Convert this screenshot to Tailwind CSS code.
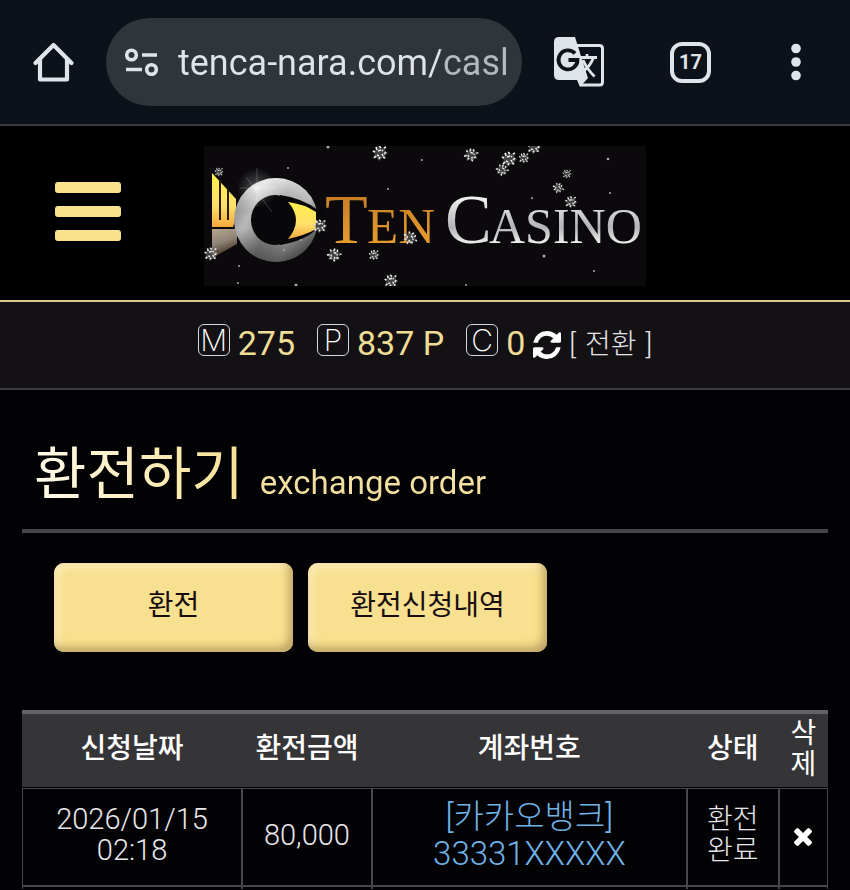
<!DOCTYPE html>
<html lang="ko">

<head>
    <meta charset="UTF-8">
    <meta name="viewport" content="width=device-width, initial-scale=1.0">
    <title>Ten Casino - 환전하기</title>
    <script src="https://cdn.jsdelivr.net/npm/@tailwindcss/browser@4"></script>
</head>

<body class="min-h-screen overflow-x-hidden bg-[#020104] text-white font-['Roboto','Noto_Sans_CJK_KR',sans-serif]">

    <!-- browser bar -->
    <div class="flex items-center border-b-2 border-[#3b3c40] bg-[#0d1119] pt-[18px] pb-[18px] pl-8 pr-11 text-[#dfe3ea]">
        <button class="shrink-0" aria-label="Home">
            <svg class="h-11 w-11" viewBox="0 0 44 44" fill="none" stroke="currentColor" stroke-width="4.200" stroke-linejoin="round">
                <path d="M3.500 22L21.500 4L39.500 22M8 18V38.500H35V18" stroke-linecap="round" transform="translate(0 1)" />
            </svg>
        </button>
        <div class="ml-[30px] flex h-[88px] min-w-0 flex-1 items-center rounded-full bg-[#2f3539] pl-[18px] pr-3">
            <svg class="h-9 w-9 shrink-0" viewBox="0 0 36 36" fill="none" stroke="currentColor" stroke-width="3.600">
                <circle cx="7.500" cy="11" r="4.800" />
                <path d="M18 11H33M2 25.500H18" />
                <circle cx="27.500" cy="25.500" r="4.800" />
            </svg>
            <input type="text" value="tenca-nara.com/casl" aria-label="URL"
                class="ml-[18px] h-12 min-w-0 flex-1 bg-linear-to-r from-[#dfe3ea] from-79% to-[#b4b9be] to-79% bg-clip-text pt-[2px] text-[36px] text-transparent outline-none">
        </div>
        <button class="ml-8 shrink-0" aria-label="Translate">
            <svg class="h-[50px] w-[51px]" viewBox="0 0 51 50">
                <path d="M22 8.500H45.500Q48.500 8.500 48.500 11.500V45Q48.500 48 45.500 48H26" fill="none" stroke="#dfe3ea" stroke-width="3" />
                <path d="M5 0H21L34 41L26 50L23 43H5Q0 43 0 38V5Q0 0 5 0Z" fill="#dfe3ea" />
                <path d="M26 15.500L35 43L45 43V15Z" fill="#0d1119" />
                <path d="M27 20.500H43M33 17V20.500M39.500 20.500Q36 30 28 35M29 23Q33 32 40.500 39.500" fill="none" stroke="#dfe3ea" stroke-width="2.800" />
                <path d="M21 16.500A9.500 9.500 0 1 0 23.500 23H14.500" fill="none" stroke="#0d1119" stroke-width="3.800" />
            </svg>
        </button>
        <button class="ml-[65px] flex h-[41px] w-[41px] shrink-0 items-center justify-center rounded-xl border-4 border-[#dfe3ea] font-['Roboto',sans-serif] text-xl font-bold" aria-label="Tabs">17</button>
        <button class="ml-[75px] shrink-0" aria-label="Menu">
            <svg class="h-10 w-5" viewBox="0 0 20 40" fill="currentColor">
                <circle cx="10" cy="6.500" r="4.800" />
                <circle cx="10" cy="20" r="4.800" />
                <circle cx="10" cy="33.500" r="4.800" />
            </svg>
        </button>
    </div>

    <!-- site header -->
    <header class="relative flex justify-center border-b-2 border-[#d8c98c] bg-black pt-5 pb-[14px]">
        <button class="absolute top-14 left-[55px] flex w-[66px] flex-col gap-[13px]" aria-label="메뉴">
            <span class="block h-[11px] w-full rounded-[3px] bg-[#fae18d]"></span>
            <span class="block h-[11px] w-full rounded-[3px] bg-[#fae18d]"></span>
            <span class="block h-[11px] w-full rounded-[3px] bg-[#fae18d]"></span>
        </button>
        <a href="#" aria-label="Ten Casino">
            <svg class="h-[140px] w-[442px]" viewBox="0 0 442 140">
                <defs>
                    <linearGradient id="ring" x1="0" y1="0.300" x2="1" y2="0.800">
                        <stop offset="0" stop-color="#8b8b8b" />
                        <stop offset="0.200" stop-color="#b9b9b9" />
                        <stop offset="0.450" stop-color="#8a8a8a" />
                        <stop offset="0.700" stop-color="#a5a5a5" />
                        <stop offset="1" stop-color="#555" />
                    </linearGradient>
                    <linearGradient id="shade" x1="0" y1="0" x2="0" y2="1">
                        <stop offset="0" stop-color="#fff" stop-opacity="0.700" />
                        <stop offset="0.400" stop-color="#fff" stop-opacity="0" />
                        <stop offset="0.600" stop-color="#000" stop-opacity="0" />
                        <stop offset="1" stop-color="#000" stop-opacity="0.450" />
                    </linearGradient>
                    <linearGradient id="gold" x1="0" y1="0" x2="0" y2="1">
                        <stop offset="0" stop-color="#fff04a" />
                        <stop offset="0.600" stop-color="#ffdf6a" />
                        <stop offset="1" stop-color="#f2a93c" />
                    </linearGradient>
                    <linearGradient id="mirror" x1="0" y1="0" x2="0.300" y2="1">
                        <stop offset="0" stop-color="#b9a68c" />
                        <stop offset="0.500" stop-color="#8f8579" />
                        <stop offset="1" stop-color="#3a2c18" />
                    </linearGradient>
                    <linearGradient id="ten" x1="0" y1="0" x2="0" y2="1">
                        <stop offset="0" stop-color="#bd7424" />
                        <stop offset="0.600" stop-color="#dd932c" />
                        <stop offset="1" stop-color="#efa52c" />
                    </linearGradient>
                    <linearGradient id="silver" x1="0" y1="0" x2="0" y2="1">
                        <stop offset="0.200" stop-color="#f4f4f4" />
                        <stop offset="0.600" stop-color="#b4b4b8" />
                        <stop offset="0.800" stop-color="#ececec" />
                    </linearGradient>
                    <radialGradient id="glow">
                        <stop offset="0" stop-color="#fff" stop-opacity="0.900" />
                        <stop offset="0.300" stop-color="#fff" stop-opacity="0.300" />
                        <stop offset="1" stop-color="#fff" stop-opacity="0" />
                    </radialGradient>
                    <g id="flake" fill="none">
                        <path d="M0-7L2-5L6-6L5-2L8 0L5 3L6 6L2 5L-1 8L-3 5L-7 5L-5 1L-8-2L-4-3L-4-7L-1-5Z" fill="#777" fill-opacity="0.550" />
                        <path d="M-1-7l2 2M4-5l2-1M6-1l-2 2M5 5l-2-1M-1 6l1-2M-6 5l2-2M-7-2l2 1M-4-6l1 3M-2-2l3-1M2 1l1 2M-3 2l2 1M2-3l1 1" stroke="#eee" stroke-width="1.600" />
                    </g>
                </defs>
                <rect width="442" height="140" fill="#0b090c" />
                <!-- emblem -->
                <path d="M8 27L32 53V72L29 81H8Z" fill="url(#gold)" />
                <path d="M16 34V74M24 43V74" stroke="#2a1b06" stroke-width="2" />
                <path d="M8 83H33V98L8 112Z" fill="url(#mirror)" />
                <circle cx="72" cy="74" r="42" fill="url(#ring)" />
                <circle cx="72" cy="74" r="42" fill="url(#shade)" />
                <ellipse cx="71" cy="74" rx="24" ry="25" fill="#08070a" />
                <path d="M76 49Q98 52 114 64L118 62V90L112 83Q103 94 76 99Z" fill="#08070a" />
                <path d="M84 56Q100 58 112 66V83Q102 89 84 93Q100 74 84 56Z" fill="url(#gold)" />
                <circle cx="53" cy="42" r="20" fill="url(#glow)" opacity="0.700" />
                <path d="M53 22V60M36 42H72M42 31L68 66M66 32L40 54" stroke="#fff" stroke-opacity="0.300" stroke-width="0.700" />
                <!-- wordmark -->
                <g font-family="Liberation Serif, serif">
                    <text y="97" fill="url(#ten)"><tspan x="121" font-size="70">T</tspan><tspan x="163" font-size="51">EN</tspan></text>
                    <text y="97" fill="url(#silver)"><tspan x="241" font-size="70">C</tspan><tspan x="285" font-size="50">ASINO</tspan></text>
                </g>
                <!-- snow -->
                <use href="#flake" transform="translate(15 26) scale(0.600)" />
                <use href="#flake" x="176" y="7" />
                <use href="#flake" transform="translate(7 108) scale(0.900)" />
                <use href="#flake" transform="translate(116 80) scale(0.900)" />
                <use href="#flake" transform="translate(130 109) rotate(40) scale(0.900)" />
                <use href="#flake" transform="translate(170 109) scale(0.700)" />
                <use href="#flake" transform="translate(206 92) rotate(70) scale(0.900)" />
                <use href="#flake" transform="translate(187 135) scale(0.900)" />
                <use href="#flake" transform="translate(267 9) rotate(30) scale(0.900)" />
                <use href="#flake" x="305" y="13" />
                <use href="#flake" transform="translate(298 24) rotate(50) scale(0.800)" />
                <use href="#flake" transform="translate(320 12) scale(0.700)" />
                <use href="#flake" transform="translate(330 1) scale(0.900)" />
                <use href="#flake" transform="translate(363 28) scale(0.600)" />
                <use href="#flake" transform="translate(354 42) rotate(60) scale(0.700)" />
                <use href="#flake" transform="translate(367 56) scale(0.800)" />
                <g fill="#aaa">
                    <circle cx="84" cy="22" r="1" /><circle cx="184" cy="43" r="1" /><circle cx="124" cy="1" r="1.500" />
                    <circle cx="80" cy="104" r="1" /><circle cx="97" cy="94" r="1" /><circle cx="35" cy="120" r="1" />
                    <circle cx="34" cy="137" r="1" /><circle cx="92" cy="139" r="1.500" /><circle cx="218" cy="14" r="1" />
                    <circle cx="404" cy="13" r="1.300" /><circle cx="406" cy="47" r="1" /><circle cx="328" cy="52" r="1" />
                    <circle cx="340" cy="110" r="1.500" /><circle cx="390" cy="125" r="1" /><circle cx="262" cy="139" r="1" />
                </g>
            </svg>
        </a>
    </header>

    <!-- balance -->
    <div class="flex h-[88px] items-center justify-center border-b-2 border-[#3c3b3e] bg-[#131114] pb-1 text-[34px] text-[#f0dc94]">
        <span class="mr-2 mb-1.5 flex h-8 w-8 items-center justify-center rounded-md border border-[#d8d8dc] font-['Inter',sans-serif] text-[30px] font-extralight text-white">M</span>
        <span>275</span>
        <span class="ml-[22px] mr-2 mb-1.5 flex h-8 w-8 items-center justify-center rounded-md border border-[#d8d8dc] font-['Inter',sans-serif] text-[30px] font-extralight text-white">P</span>
        <span>837 P</span>
        <span class="ml-[22px] mr-2 mb-1.5 flex h-8 w-8 items-center justify-center rounded-md border border-[#d8d8dc] font-['Inter',sans-serif] text-[30px] font-extralight text-white">C</span>
        <span>0</span>
        <button class="ml-2 mt-1" aria-label="새로고침">
            <svg class="h-7 w-7" viewBox="0 0 1536 1536" fill="#fff">
                <path d="M1511 928q0 5-1 7-64 268-268 434.500t-478 166.500q-146 0-282.500-55t-243.500-157l-129 129q-19 19-45 19t-45-19-19-45v-448q0-26 19-45t45-19h448q26 0 45 19t19 45-19 45l-137 137q71 66 161 102t187 36q134 0 250-65t186-179q11-17 53-117 8-23 30-23h192q13 0 22.500 9.500t9.500 22.500zm25-800v448q0 26-19 45t-45 19h-448q-26 0-45-19t-19-45 19-45l138-138q-148-137-349-137-134 0-250 65t-186 179q-11 17-53 117-8 23-30 23h-199q-13 0-22.500-9.500t-9.500-22.500v-7q65-268 270-434.500t480-166.500q146 0 284 55.500t245 156.500l130-129q19-19 45-19t45 19 19 45z" />
            </svg>
        </button>
        <a href="#" class="ml-2 mt-1 flex gap-[9px] text-[28px] font-light text-[#e4e4e6]"><span>[</span><span>전환</span><span>]</span></a>
    </div>

    <main class="px-[22px]">
        <h1 class="flex items-baseline border-b-4 border-[#454448] pt-[41px] pb-0.5 pl-3 text-[57px] leading-[88px]">
            <span class="bg-linear-to-r from-[#fffbe9] to-[#f8e190] bg-clip-text text-transparent">환전하기</span>
            <span class="ml-4 bg-linear-to-b from-[#f8e7b0] to-[#f0d890] bg-clip-text text-[33px] text-transparent">exchange order</span>
        </h1>

        <div class="flex gap-[15px] pt-[30px] pl-8 text-[28px] text-[#170d10]">
            <button class="h-[89px] w-[239px] rounded-[10px] bg-[#f7e08f] pb-1 shadow-[inset_-4px_-5px_8px_#bfa564,inset_4px_4px_8px_#ffedbd]">환전</button>
            <button class="h-[89px] w-[239px] rounded-[10px] bg-[#f7e08f] pb-1 shadow-[inset_-4px_-5px_8px_#bfa564,inset_4px_4px_8px_#ffedbd]">환전신청내역</button>
        </div>

        <table class="mt-[58px] w-full table-fixed border-separate border-spacing-0 text-center text-[28px] leading-[31px]">
            <colgroup>
                <col class="w-[27.3%]">
                <col class="w-[16.1%]">
                <col class="w-[39.1%]">
                <col class="w-[11.4%]">
                <col class="w-[6.1%]">
            </colgroup>
            <thead>
                <tr class="h-[78px] bg-[#353437]">
                    <th class="border-t-4 border-b border-t-[#626164] border-b-black pb-1 font-medium">신청날짜</th>
                    <th class="border-t-4 border-b border-t-[#626164] border-b-black pb-1 font-medium">환전금액</th>
                    <th class="border-t-4 border-b border-t-[#626164] border-b-black pb-1 font-medium">계좌번호</th>
                    <th class="border-t-4 border-b border-t-[#626164] border-b-black pb-1 font-medium">상태</th>
                    <th class="border-t-4 border-b border-t-[#626164] border-b-black px-2 pb-1 font-normal">삭제</th>
                </tr>
            </thead>
            <tbody class="font-light text-[#e8e8ea]">
                <tr class="h-[98px]">
                    <td class="border border-[#49474b] pb-1 text-[29px] leading-[31px]">2026/01/15<br>02:18</td>
                    <td class="border border-[#49474b] pb-1 text-[29px] leading-[31px]">80,000</td>
                    <td class="border border-[#49474b] pb-1 text-[33px] leading-[37px] text-[#6fb2e6]">[카카오뱅크]<br>33331XXXXX</td>
                    <td class="border border-[#49474b] pb-1">환전<br>완료</td>
                    <td class="border border-[#49474b] pb-1">
                        <button class="align-middle" aria-label="삭제">
                            <svg class="h-[18px] w-[18px]" viewBox="110 366 1188 1188" fill="#fff">
                                <path d="M1298 1322q0 40-28 68l-136 136q-28 28-68 28t-68-28l-294-294-294 294q-28 28-68 28t-68-28l-136-136q-28-28-28-68t28-68l294-294-294-294q-28-28-28-68t28-68l136-136q28-28 68-28t68 28l294 294 294-294q28-28 68-28t68 28l136 136q28 28 28 68t-28 68l-294 294 294 294q28 28 28 68z" />
                            </svg>
                        </button>
                    </td>
                </tr>
                <tr class="h-[3px]">
                    <td class="border border-b-0 border-[#49474b] p-0"></td>
                    <td class="border border-b-0 border-[#49474b] p-0"></td>
                    <td class="border border-b-0 border-[#49474b] p-0"></td>
                    <td class="border border-b-0 border-[#49474b] p-0"></td>
                    <td class="border border-b-0 border-[#49474b] p-0"></td>
                </tr>
            </tbody>
        </table>
    </main>
</body>

</html>
